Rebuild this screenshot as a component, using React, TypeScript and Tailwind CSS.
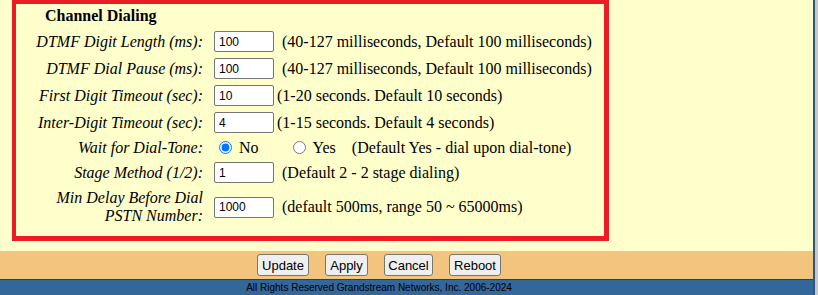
import React from 'react';

type Row = {
  label: React.ReactNode;
  value: string;
  hint: string;
  hintGap: string;
  height: string;
};

const rows: Row[] = [
  { label: 'DTMF Digit Length (ms):', value: '100', hint: '(40-127 milliseconds, Default 100 milliseconds)', hintGap: 'ml-[8px]', height: 'h-[27px]' },
  { label: 'DTMF Dial Pause (ms):', value: '100', hint: '(40-127 milliseconds, Default 100 milliseconds)', hintGap: 'ml-[8px]', height: 'h-[27px]' },
  { label: 'First Digit Timeout (sec):', value: '10', hint: '(1-20 seconds. Default 10 seconds)', hintGap: 'ml-[3px]', height: 'h-[27px]' },
  { label: 'Inter-Digit Timeout (sec):', value: '4', hint: '(1-15 seconds. Default 4 seconds)', hintGap: 'ml-[3px]', height: 'h-[27px]' },
];

const rowsAfter: Row[] = [
  { label: 'Stage Method (1/2):', value: '1', hint: '(Default 2 - 2 stage dialing)', hintGap: 'ml-[8px]', height: 'h-[27px]' },
  {
    label: (
      <>
        Min Delay Before Dial
        <br />
        PSTN Number:
      </>
    ),
    value: '1000',
    hint: '(default 500ms, range 50 ~ 65000ms)',
    hintGap: 'ml-[8px]',
    height: 'h-[42px]',
  },
];

const FieldRow: React.FC<{ row: Row }> = ({ row }) => (
  <div className={`flex items-center ${row.height}`}>
    <div className="w-[187px] text-right italic leading-[18px]">{row.label}</div>
    <input
      type="text"
      defaultValue={row.value}
      className="ml-[11px] w-[60px] h-[21px] border border-[#767676] rounded-[2px] bg-white pl-[4px] text-[12px] text-black outline-none font-[family-name:'Liberation_Sans',sans-serif]"
    />
    <span className={`${row.hintGap} whitespace-nowrap`}>{row.hint}</span>
  </div>
);

const buttons = [
  { name: 'Update', w: 'w-[52px]' },
  { name: 'Apply', w: 'w-[43px]' },
  { name: 'Cancel', w: 'w-[49px]' },
  { name: 'Reboot', w: 'w-[52px]' },
];

export default function App() {
  return (
    <div className="w-[818px] h-[295px] bg-[#c8c8c8] flex overflow-hidden">
      <div className="w-[815px] h-full border-r-2 border-[#2b5582] flex flex-col bg-[#ffffcc]">
        <div className="h-[251px] pl-[12px]">
          <div className="w-[597px] h-[241px] border-4 border-r-[5px] border-b-[5px] border-[#ed1c24] text-[16px] text-black font-[family-name:'Liberation_Serif',serif]">
            <div className="h-[24px] pt-[3px] pl-[29px] font-bold leading-[18px]">Channel Dialing</div>
            {rows.map((r, i) => (
              <FieldRow key={i} row={r} />
            ))}
            <div className="flex items-center h-[23px]">
              <div className="w-[187px] text-right italic">Wait for Dial-Tone:</div>
              <input type="radio" name="dialtone" defaultChecked className="ml-[16px] m-0 w-[13px] h-[13px] accent-[#0075ff]" />
              <span className="ml-[7px]">No</span>
              <input type="radio" name="dialtone" className="ml-[34px] m-0 w-[13px] h-[13px]" />
              <span className="ml-[7px]">Yes</span>
              <span className="ml-[16px] whitespace-nowrap">(Default Yes - dial upon dial-tone)</span>
            </div>
            {rowsAfter.map((r, i) => (
              <FieldRow key={i} row={r} />
            ))}
          </div>
        </div>
        <div className="h-[28px] bg-[#f2c47e] w-[813px]">
          <div className="w-[758px] h-full flex items-center justify-center gap-4">
            {buttons.map((b) => (
              <button
                key={b.name}
                className={`${b.w} h-[22px] bg-[#efefef] border border-[#767676] rounded-[3px] text-[13px] text-black font-[family-name:'Liberation_Sans',sans-serif] leading-none`}
              >
                {b.name}
              </button>
            ))}
          </div>
        </div>
        <div className="flex-1 bg-[#336699] border-t border-[#1f4469]">
          <div className="w-[758px] text-center text-[10px] leading-[15px] text-black font-[family-name:'Liberation_Sans',sans-serif]">
            All Rights Reserved Grandstream Networks, Inc. 2006-2024
          </div>
        </div>
      </div>
    </div>
  );
}
